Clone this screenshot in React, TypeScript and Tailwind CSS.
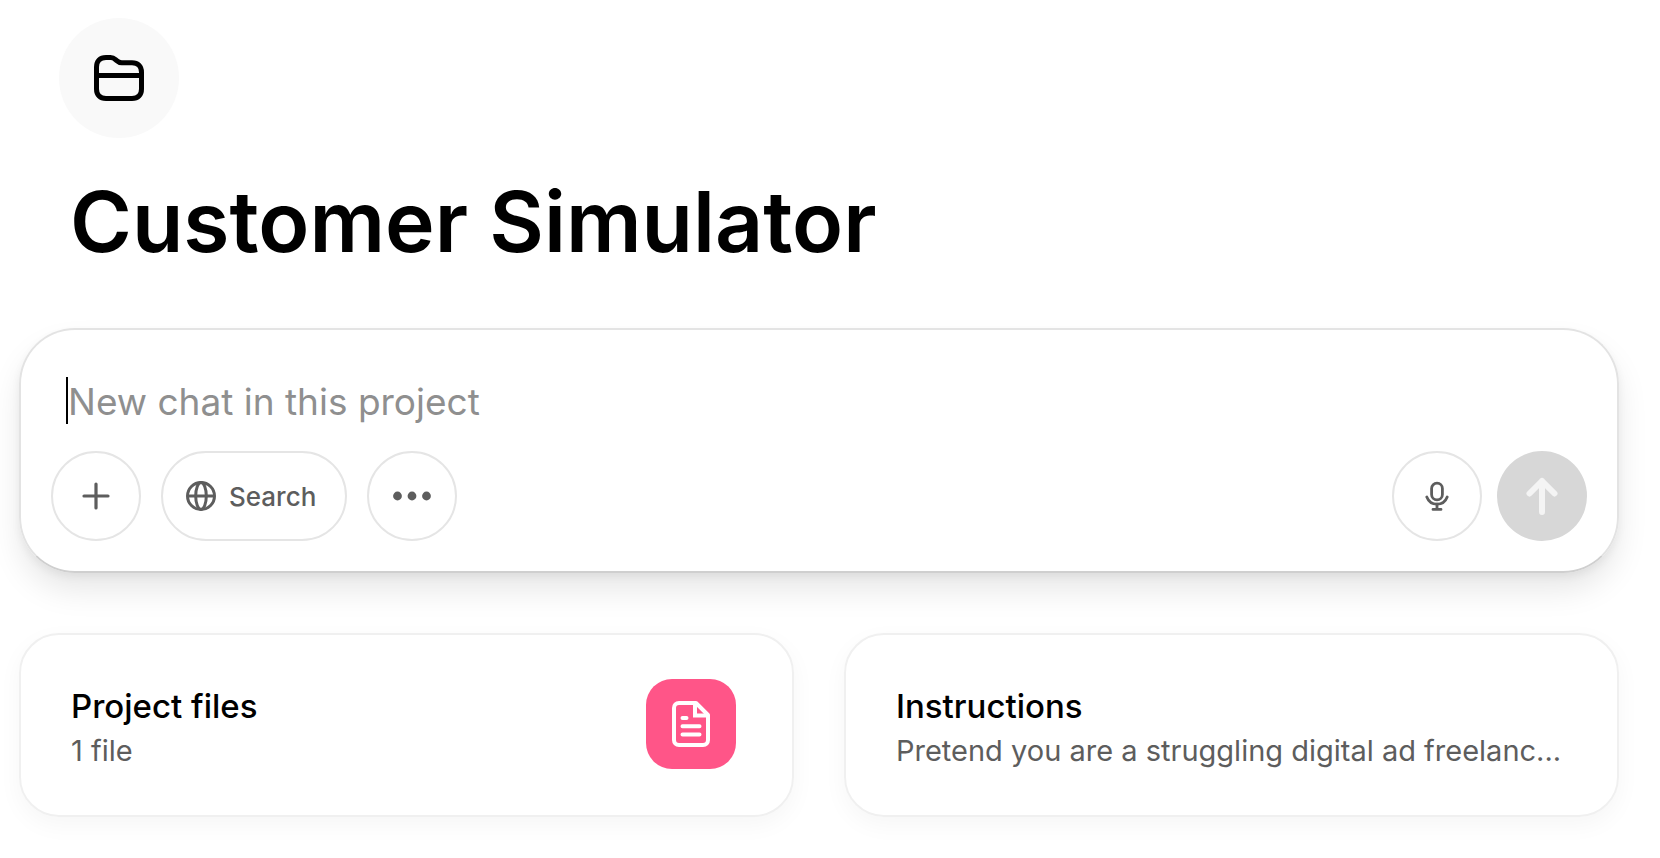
import { useState } from "react"
import type { ReactNode } from "react"

function FolderIcon() {
  return (
    <svg width="50" height="46" viewBox="0 0 50 46" fill="none" stroke="currentColor" strokeWidth="5" aria-hidden="true">
      <path d="M2.5 12C2.5 6 6 2.5 12 2.5H16.5C18.5 2.5 20 3.2 21.5 4.6L22.7 5.7C24.2 7.1 25.7 7.8 27.7 7.8H38C44 7.8 47.5 11.3 47.5 17.3V34C47.5 40 44 43.5 38 43.5H12C6 43.5 2.5 40 2.5 34V12Z" />
      <path d="M2.5 20.5H47.5" />
    </svg>
  )
}

function PlusIcon() {
  return (
    <svg width="28" height="28" viewBox="0 0 28 28" fill="none" stroke="currentColor" strokeWidth="3.2" strokeLinecap="round" aria-hidden="true">
      <path d="M14 2V26M2 14H26" />
    </svg>
  )
}

function GlobeIcon() {
  return (
    <svg width="30" height="30" viewBox="0 0 30 30" fill="none" stroke="currentColor" strokeWidth="3" aria-hidden="true">
      <circle cx="15" cy="15" r="13.5" />
      <ellipse cx="15" cy="15" rx="5.3" ry="13.5" />
      <path d="M1.5 15H28.5" />
    </svg>
  )
}

function DotsIcon() {
  return (
    <svg width="38" height="10" viewBox="0 0 38 10" fill="currentColor" aria-hidden="true">
      <circle cx="4.5" cy="5" r="4.4" />
      <circle cx="19" cy="5" r="4.4" />
      <circle cx="33.5" cy="5" r="4.4" />
    </svg>
  )
}

function MicIcon() {
  return (
    <svg width="24" height="30" viewBox="0 0 24 30" fill="none" stroke="currentColor" strokeWidth="2.8" strokeLinecap="round" aria-hidden="true">
      <rect x="6.6" y="2.2" width="10.8" height="16.6" rx="5.4" />
      <path d="M1.8 16C3.4 20.2 7.4 23.2 12 23.2C16.6 23.2 20.6 20.2 22.2 16" />
      <path d="M12 23.2V28M8 28.4H16" />
    </svg>
  )
}

function ArrowUpIcon() {
  return (
    <svg width="32" height="38" viewBox="0 0 32 38" fill="none" stroke="currentColor" strokeWidth="6" strokeLinecap="round" strokeLinejoin="round" aria-hidden="true">
      <path d="M16 35V4M3.5 16.5L16 4L28.5 16.5" />
    </svg>
  )
}

function FileIcon() {
  return (
    <svg width="38" height="46" viewBox="0 0 38 46" fill="none" stroke="currentColor" strokeWidth="4" strokeLinecap="round" aria-hidden="true">
      <path d="M7 2H24L36 14V39C36 42 34 44 31 44H7C4 44 2 42 2 39V7C2 4 4 2 7 2Z" strokeLinejoin="round" />
      <path d="M23 2.5V14.5H35.5" strokeLinecap="butt" />
      <path d="M10.5 17H14.5M10.5 25.2H27.5M10.5 33.5H27.5" />
    </svg>
  )
}

type RoundButtonProps = {
  label: string
  children: ReactNode
}

function RoundButton({ label, children }: RoundButtonProps) {
  return (
    <button
      type="button"
      aria-label={label}
      className="flex size-[90px] shrink-0 items-center justify-center rounded-full border-2 border-[#e5e5e5] hover:bg-neutral-50"
    >
      {children}
    </button>
  )
}

type ProjectCardProps = {
  title: string
  detail: string
  icon?: ReactNode
}

function ProjectCard({ title, detail, icon }: ProjectCardProps) {
  return (
    <button
      type="button"
      className="flex min-w-0 items-start justify-between gap-6 rounded-[40px] border-2 border-[#f0f0f0] pt-11 pr-14 pb-[43px] pl-[50px] text-left shadow-[0_8px_24px_rgba(0,0,0,0.04)]"
    >
      <span className="pt-[3px] whitespace-nowrap">
        <span className="block text-[33px] leading-[48px] font-medium text-black">{title}</span>
        <span className="block text-[29px] leading-[42px] text-[#5d5d5d]">{detail}</span>
      </span>
      {icon}
    </button>
  )
}

export default function App() {
  const [message, setMessage] = useState("")

  return (
    <main className="bg-white pt-[18px] pr-[41px] pb-10 pl-[19px] font-['Inter',sans-serif]">
      <header className="pl-10">
        <div className="flex size-[120px] items-center justify-center rounded-full bg-[#f9f9f9] text-black">
          <FolderIcon />
        </div>
        <h1 className="mt-7 pl-[11px] text-[84px] leading-[112px] font-semibold text-black">Customer Simulator</h1>
      </header>

      <form
        onSubmit={(e) => e.preventDefault()}
        className="mt-[50px] rounded-[56px] border-2 border-[#e3e3e3] border-b-[#cfcfcf] px-[30px] pt-[47px] pb-[30px] shadow-[0_4px_8px_rgba(0,0,0,0.05),0_18px_32px_-2px_rgba(0,0,0,0.10)]"
      >
        <div className="flex items-start pl-[15px]">
          {message === "" && <span className="h-[47px] w-0.5 shrink-0 bg-black" />}
          <input
            type="text"
            aria-label="New chat in this project"
            placeholder="New chat in this project"
            value={message}
            onChange={(e) => setMessage(e.target.value)}
            className="h-[50px] min-w-0 flex-1 text-[37px] text-black outline-none placeholder:text-[#8f8f8f]"
          />
        </div>

        <div className="mt-6 flex items-center justify-between text-[#5d5d5d]">
          <div className="flex items-center gap-5">
            <RoundButton label="Add">
              <PlusIcon />
            </RoundButton>
            <button
              type="button"
              className="flex h-[90px] items-center gap-[13px] rounded-full border-2 border-[#e5e5e5] pr-[29px] pl-[23px] text-[26px] font-medium hover:bg-neutral-50"
            >
              <GlobeIcon />
              Search
            </button>
            <RoundButton label="More">
              <DotsIcon />
            </RoundButton>
          </div>
          <div className="flex items-center gap-[15px]">
            <RoundButton label="Dictate">
              <MicIcon />
            </RoundButton>
            <button
              type="submit"
              aria-label="Send"
              className="flex size-[90px] items-center justify-center rounded-full bg-[#d7d7d7] text-[#f4f4f4]"
            >
              <ArrowUpIcon />
            </button>
          </div>
        </div>
      </form>

      <div className="mt-[60px] grid grid-cols-2 gap-[50px]">
        <ProjectCard
          title="Project files"
          detail="1 file"
          icon={
            <span className="flex size-[90px] shrink-0 items-center justify-center rounded-[26px] bg-[#ff5588] text-white">
              <FileIcon />
            </span>
          }
        />
        <ProjectCard title="Instructions" detail="Pretend you are a struggling digital ad freelanc..." />
      </div>
    </main>
  )
}
